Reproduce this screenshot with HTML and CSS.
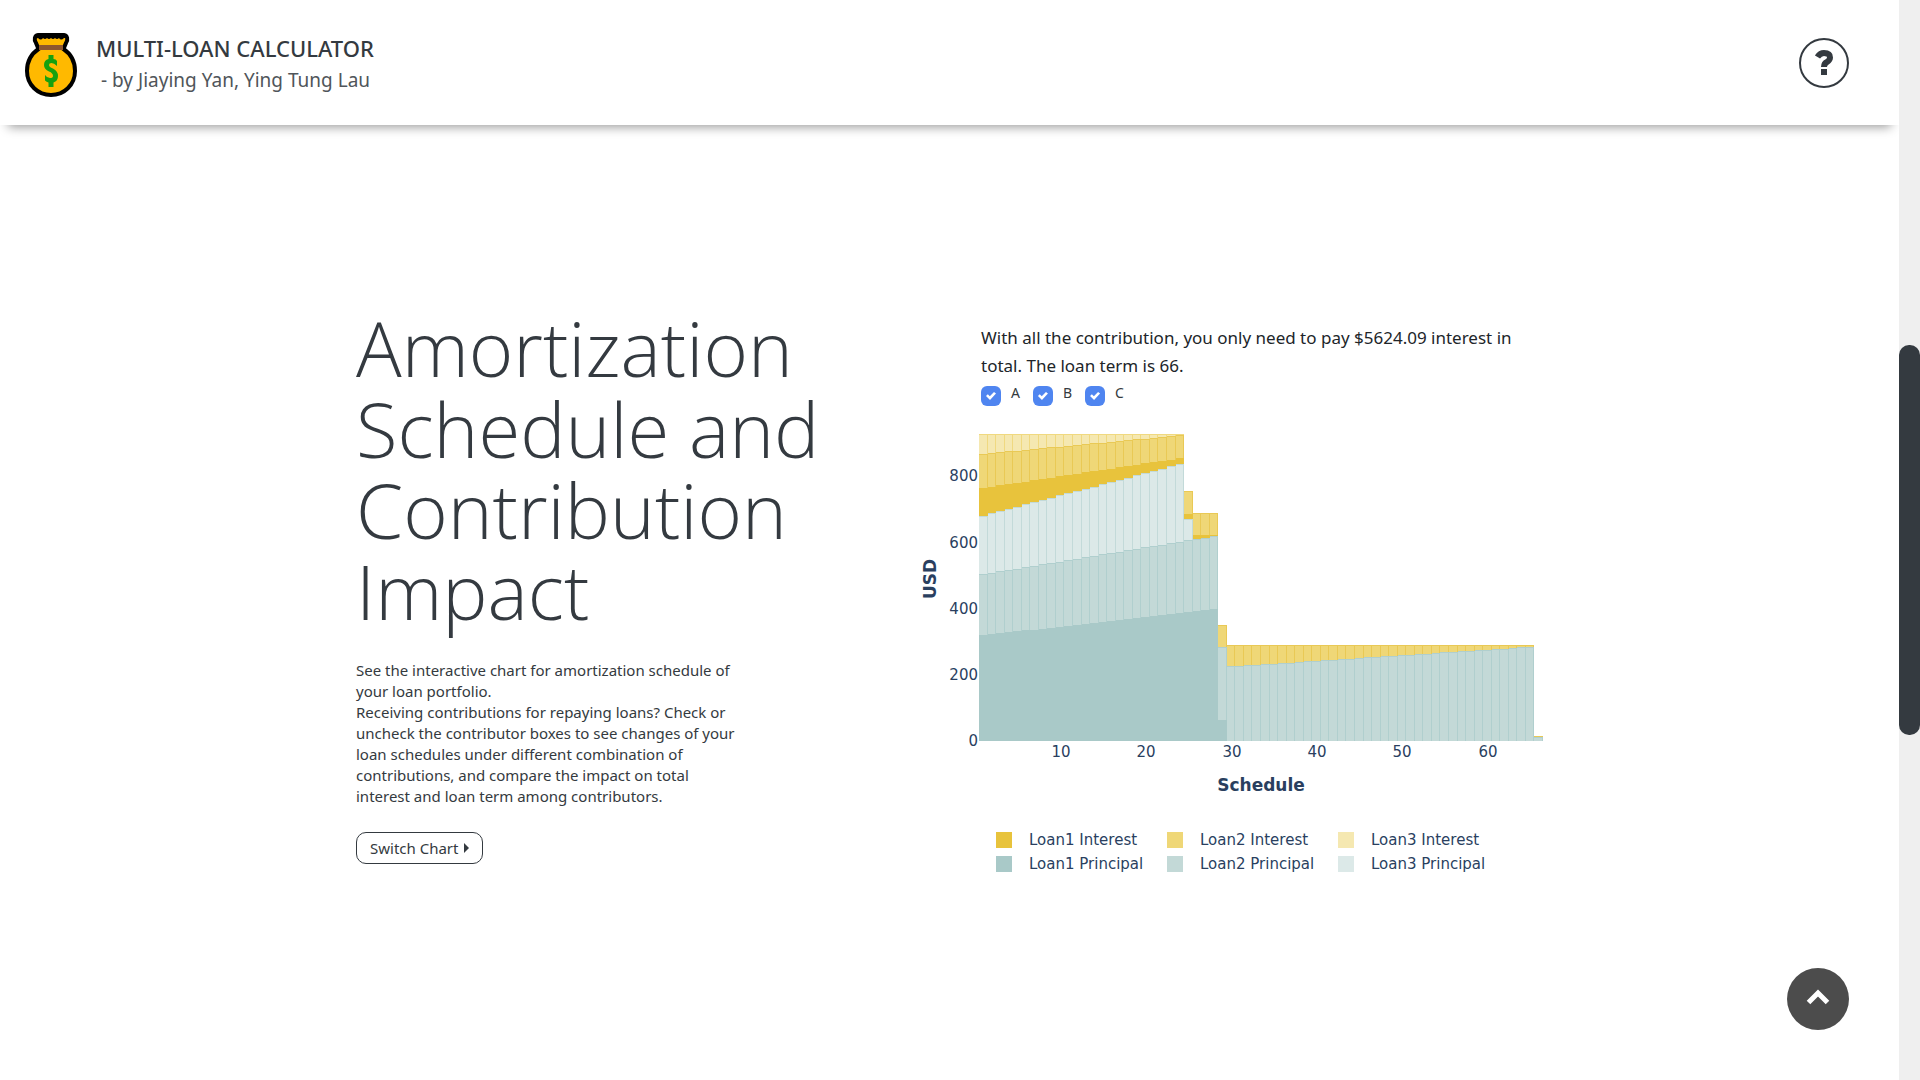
FILE: index.html
```html
<!DOCTYPE html>
<html lang="en">
<head>
<meta charset="utf-8">
<meta name="viewport" content="width=device-width, initial-scale=1">
<title>Multi-Loan Calculator</title>
<link rel="stylesheet" href="styles.css">
</head>
<body>
<div class="page">
  <header class="header">
    <svg class="logo" viewBox="0 0 52 64" aria-hidden="true">
      <path d="M14 2H38C43 2 43 7 41 10L38.500 16C46 21 50 29 50 38C50 52 39 62 26 62S2 52 2 38C2 29 6 21 13.500 16L11 10C9 7 9 2 14 2Z" fill="#ffb900" stroke="#000" stroke-width="4"/>
      <path d="M11 3Q11 0 15 0H37Q42 0 42 5L39 5Q36 8 34 5Q32 7 30 5Q28 7 26 5Q24 7 22 5Q20 7 18 5Q16 8 13 5L10 6Z" fill="#000"/>
      <path d="M14 12H38V17H14Z" fill="#8e562e"/>
      <path d="M32 31V28Q31 26 28.500 26V22H23.500V26Q19 27 19 32Q19 36 24 38.500Q28 40 28 43Q28 45 25 45Q22 45 20 42V47.500Q21.500 49 23.500 49.500V54H28.500V49.500Q33 48 33 43Q33 38 28 35.500Q24 34 24 32Q24 30 26.500 30Q29 30 32 33Z" fill="#16a10f"/>
    </svg>
    <div class="brand">
      <h1 class="brand-title">MULTI-LOAN CALCULATOR</h1>
      <p class="brand-authors">- by Jiaying Yan, Ying Tung Lau</p>
    </div>
    <button class="help" type="button" aria-label="Help">
      <svg class="help-icon" viewBox="0 0 18 26" aria-hidden="true">
        <path d="M2.500 7Q5 3 9 3Q15 3 15 7.500Q15 10 12 12Q9 13.500 9 17" fill="none" stroke="#343a40" stroke-width="6"/>
        <path d="M6 19H12V25H6Z" fill="#343a40"/>
      </svg>
    </button>
  </header>

  <main class="content">
    <section class="intro">
      <h2 class="headline">Amortization Schedule and Contribution Impact</h2>
      <p class="copy">See the interactive chart for amortization schedule of your loan portfolio.</p>
      <p class="copy">Receiving contributions for repaying loans? Check or uncheck the contributor boxes to see changes of your loan schedules under different combination of contributions, and compare the impact on total interest and loan term among contributors.</p>
      <button class="switch" type="button">Switch Chart
        <svg class="caret" viewBox="0 0 5 10" aria-hidden="true"><path d="M0 0L5 5L0 10Z"/></svg>
      </button>
    </section>

    <section class="report">
      <p class="summary">With all the contribution, you only need to pay $5624.09 interest in total. The loan term is 66.</p>
      <div class="contributors">
        <label class="contributor"><input class="tick" type="checkbox" checked><span>A</span></label>
        <label class="contributor"><input class="tick" type="checkbox" checked><span>B</span></label>
        <label class="contributor"><input class="tick" type="checkbox" checked><span>C</span></label>
      </div>
      <svg class="chart" viewBox="0 0 630 380" role="img" aria-label="Amortization schedule">
        <g id="bars" shape-rendering="crispEdges"></g>
        <g class="axis axis-y">
          <text x="63" y="322">0</text>
          <text x="63" y="256">200</text>
          <text x="63" y="190">400</text>
          <text x="63" y="124">600</text>
          <text x="63" y="57">800</text>
        </g>
        <g class="axis axis-x">
          <text x="146" y="333">10</text>
          <text x="231" y="333">20</text>
          <text x="317" y="333">30</text>
          <text x="402" y="333">40</text>
          <text x="487" y="333">50</text>
          <text x="573" y="333">60</text>
        </g>
        <text class="axis-title" x="346" y="367">Schedule</text>
        <text class="axis-title" transform="translate(21 155) rotate(-90)">USD</text>
      </svg>
      <ul class="legend">
        <li class="key"><span class="swatch loan1-interest"></span>Loan1 Interest</li>
        <li class="key"><span class="swatch loan2-interest"></span>Loan2 Interest</li>
        <li class="key"><span class="swatch loan3-interest"></span>Loan3 Interest</li>
        <li class="key"><span class="swatch loan1-principal"></span>Loan1 Principal</li>
        <li class="key"><span class="swatch loan2-principal"></span>Loan2 Principal</li>
        <li class="key"><span class="swatch loan3-principal"></span>Loan3 Principal</li>
      </ul>
    </section>
  </main>
</div>

<button class="to-top" type="button" aria-label="Back to top">
  <svg class="chevron" viewBox="0 0 24 16" aria-hidden="true"><path d="M2.500 13.500L12 4L21.500 13.500" fill="none" stroke="#fff" stroke-width="5"/></svg>
</button>
<div class="scrollbar"><div class="thumb"></div></div>
<script src="chart.js"></script>
</body>
</html>
```
FILE: styles.css
```css
* { box-sizing: border-box; }

body {
  margin: 0;
  background: #fff;
  color: #343a40;
  font-family: "Noto Sans", "Open Sans", sans-serif;
}

h1, h2, p, ul { margin: 0; padding: 0; }
button { font: inherit; color: inherit; cursor: pointer; }

.page { min-height: 100vh; padding-right: 21px; }

.header {
  display: flex;
  align-items: center;
  height: 125px;
  padding: 0 50px 0 25px;
  box-shadow: 0 10px 10px -8px rgba(0, 0, 0, .4);
}
.logo { width: 52px; height: 64px; margin-top: 4px; }
.brand { margin: 2px auto 0 19px; }
.brand-title { font-size: 22px; line-height: 32px; font-weight: 500; }
.brand-authors { padding-left: 5px; font-size: 19px; line-height: 32px; color: #50555a; }
.help {
  display: flex;
  align-items: center;
  justify-content: center;
  width: 50px;
  height: 50px;
  padding: 0;
  background: none;
  border: 2px solid #343a40;
  border-radius: 50%;
}
.help-icon { width: 18px; height: 26px; }

.content {
  display: grid;
  grid-template-columns: 480px 630px;
  column-gap: 79px;
  justify-content: center;
  padding: 182px 0 0 2px;
}
.headline {
  margin-bottom: 29px;
  font-family: "Open Sans", "Noto Sans", sans-serif;
  font-size: 76px;
  line-height: 81px;
  font-weight: 300;
}
.copy { max-width: 384px; font-size: 15px; line-height: 21px; }
.switch {
  display: flex;
  align-items: center;
  gap: 6px;
  height: 32px;
  margin-top: 25px;
  padding: 0 13px;
  background: #fff;
  border: 1px solid #343a40;
  border-radius: 10px;
  font-size: 15px;
}
.caret { width: 5px; height: 10px; fill: #343a40; }

.report { padding-top: 17px; }
.summary { margin-left: 66px; font-size: 17px; line-height: 28px; color: #212529; }
.contributors { display: flex; gap: 13px; height: 28px; margin-left: 66px; padding-top: 5px; }
.contributor { display: flex; gap: 10px; font-size: 14px; line-height: 16px; }
.tick {
  appearance: none;
  width: 20px;
  height: 20px;
  margin: 1px 0 0;
  border-radius: 6px;
  background: #4f85f0;
  display: grid;
  place-items: center;
}
.tick:checked::before {
  content: "";
  width: 10px;
  height: 8px;
  background: #fff;
  clip-path: polygon(0 50%, 18% 28%, 38% 54%, 80% 0, 100% 20%, 40% 100%);
}

.chart { display: block; width: 100%; margin-top: 16px; }
.axis, .axis-title, .legend { font-family: Verdana, "DejaVu Sans", sans-serif; fill: #2a3f5f; }
.axis { font-size: 15px; }
.axis-y { text-anchor: end; }
.axis-x { text-anchor: middle; }
.axis-title { font-size: 17px; font-weight: 700; text-anchor: middle; }

.legend {
  display: grid;
  grid-template-columns: repeat(3, 171px);
  margin: 24px 0 0 81px;
  list-style: none;
  color: #2a3f5f;
  font-size: 15px;
  line-height: 24px;
}
.key { display: flex; align-items: center; gap: 17px; white-space: nowrap; }
.swatch { width: 16px; height: 16px; background: var(--fill); }
.bar { fill: var(--fill); }
.bar-edge { fill: var(--edge); }
.loan1-interest { --fill: #e8c33c; --edge: #e8c33c; }
.loan2-interest { --fill: #efd777; --edge: #e9c955; }
.loan3-interest { --fill: #f5e8b1; --edge: #f0d980; }
.loan1-principal { --fill: #a9c9c8; --edge: #a9c9c8; }
.loan2-principal { --fill: #c3d9d7; --edge: #b0cfce; }
.loan3-principal { --fill: #dce9e8; --edge: #c3dad9; }

.to-top {
  position: fixed;
  right: 71px;
  bottom: 50px;
  display: flex;
  align-items: center;
  justify-content: center;
  width: 62px;
  height: 62px;
  padding: 0 0 4px;
  background: #4c4c4c;
  border: 0;
  border-radius: 50%;
}
.chevron { width: 24px; height: 16px; }

.scrollbar { position: fixed; top: 0; right: 0; bottom: 0; width: 21px; padding-top: 345px; background: #efefef; }
.thumb { height: 390px; border-radius: 10px; background: #343a40; }
```
FILE: chart.js
```js
// Each run: [first month, last month, stacked height at first, stacked height at last]
const series = [
  ["loan3-interest", [[1, 24, 925, 925]]],
  ["loan2-interest", [[1, 24, 866, 922], [25, 25, 755, 755], [26, 28, 688, 688], [29, 29, 349, 349], [30, 65, 289, 289], [66, 66, 15, 15]]],
  ["loan1-interest", [[1, 24, 763, 853], [25, 25, 684, 684], [26, 28, 620, 622]]],
  ["loan3-principal", [[1, 24, 680, 835], [25, 25, 669, 669]]],
  ["loan2-principal", [[1, 28, 503, 618], [29, 29, 284, 284], [30, 65, 225, 284], [66, 66, 12, 12]]],
  ["loan1-principal", [[1, 28, 319, 397], [29, 29, 62, 62]]]
];

const svgNS = "http://www.w3.org/2000/svg";
const bars = document.getElementById("bars");
const left = 64;
const base = 317;
const step = 564 / 66;
const pxPerDollar = 66.3 / 200;

function addRect(x, y, width, height, name) {
  const rect = document.createElementNS(svgNS, "rect");
  rect.setAttribute("x", x);
  rect.setAttribute("y", y);
  rect.setAttribute("width", width);
  rect.setAttribute("height", height);
  rect.setAttribute("class", name);
  bars.appendChild(rect);
}

for (const [name, runs] of series) {
  for (const [from, to, start, end] of runs) {
    for (let month = from; month <= to; month++) {
      const t = to > from ? (month - from) / (to - from) : 0;
      const amount = start + (end - start) * t;
      const x = Math.round(left + (month - 1) * step);
      const right = Math.round(left + month * step);
      const y = Math.round(base - amount * pxPerDollar);
      addRect(x, y, right - x, base - y, `bar ${name}`);
      addRect(x, y, right - x, 1, `bar-edge ${name}`);
      addRect(right - 1, y, 1, base - y, `bar-edge ${name}`);
    }
  }
}
```
